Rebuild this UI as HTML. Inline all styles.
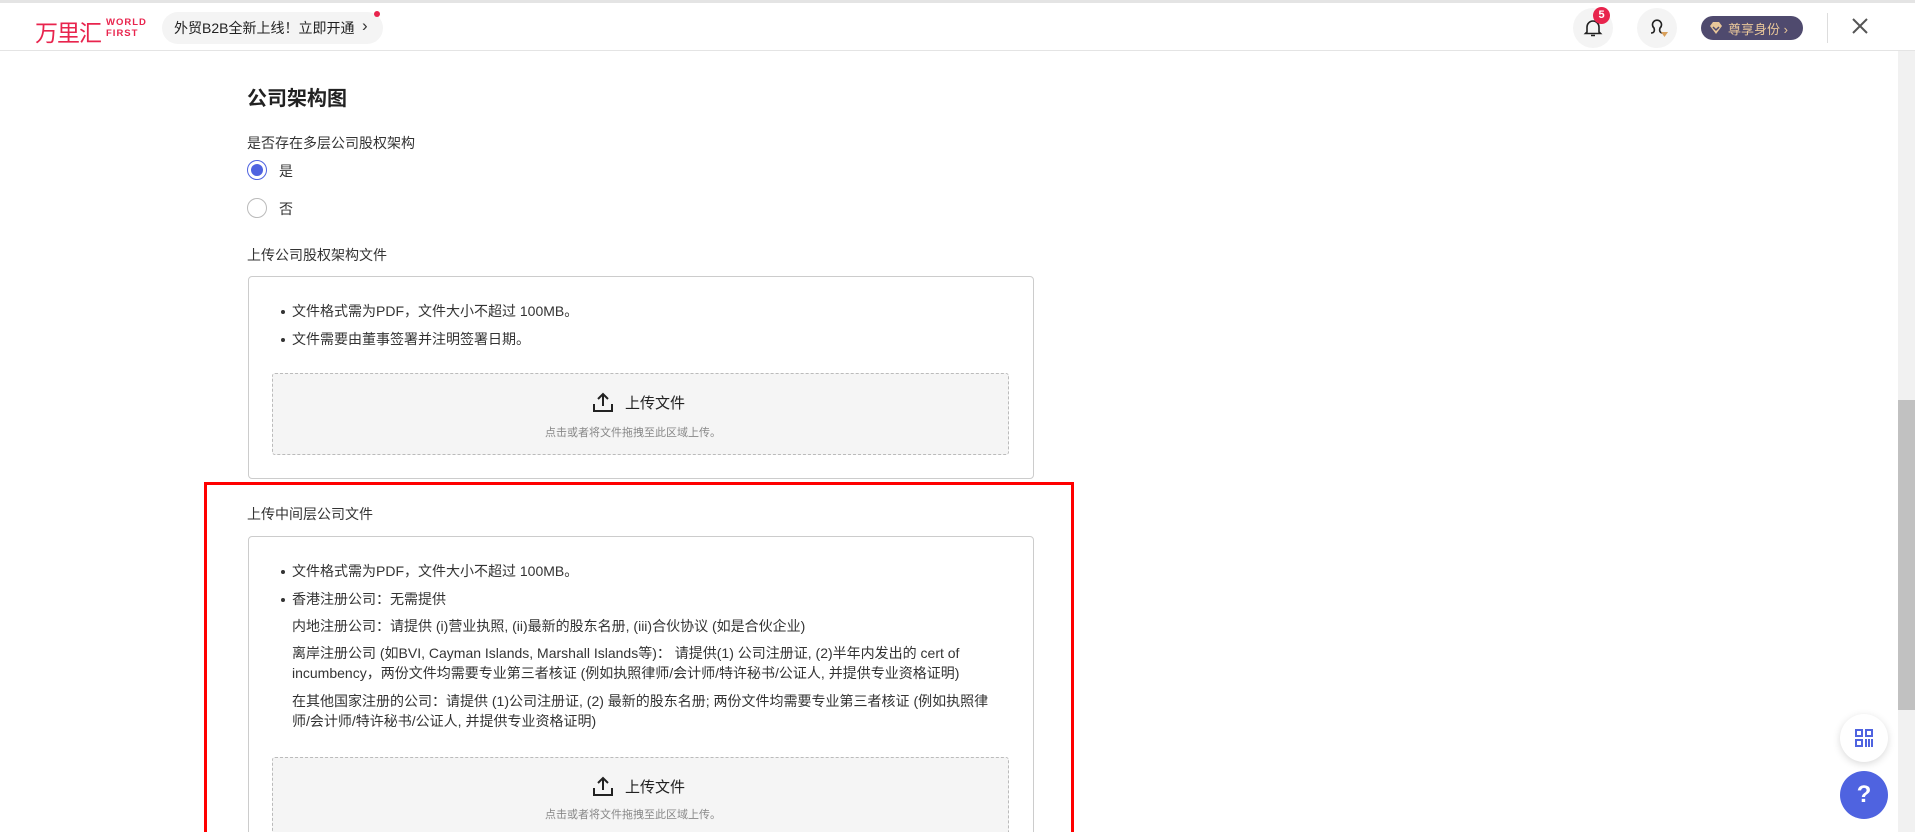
<!DOCTYPE html>
<html style="overflow:hidden;height:832px"><head><meta charset="utf-8"><style>
*{box-sizing:border-box;margin:0;padding:0}
body{width:1915px;height:832px;overflow:hidden;background:#fff;font-family:"Liberation Sans","Noto Sans CJK SC",sans-serif;color:#333;position:relative}
.abs{position:absolute}
.t13{font-size:14px;color:#333;white-space:nowrap}
.box{position:absolute;left:248px;width:786px;border:1px solid #ccc;border-radius:4px;background:#fff}
.drop{position:absolute;left:272px;width:737px;height:82px;border:1px dashed #bbb;border-radius:3px;background:#f5f5f5}
.bul{position:absolute;left:281px;width:4px;height:4px;border-radius:50%;background:#333}
</style></head><body>
<div class="abs" style="left:0;top:0;width:1915px;height:3px;background:#e4e4e4"></div>
<div class="abs" style="left:0;top:50px;width:1915px;height:1px;background:#e4e4e4"></div>
<div class="abs" style="left:35px;top:14px;font-size:23px;color:#e8244d;letter-spacing:-1px">万里汇</div>
<div class="abs" style="left:106px;top:17px;font-size:9.5px;font-weight:bold;color:#e8244d;line-height:11px;letter-spacing:1px">WORLD<br>FIRST</div>
<div class="abs" style="left:162px;top:12px;width:221px;height:32px;border-radius:16px;background:#f4f4f4"></div>
<div class="abs" style="left:174px;top:18px;font-size:14px;color:#222">外贸B2B全新上线！立即开通</div>
<div class="abs" style="left:362px;top:16px;font-size:17px;color:#333">›</div>
<div class="abs" style="left:374px;top:11px;width:6px;height:6px;border-radius:50%;background:#e8244d"></div>
<div class="abs" style="left:1573px;top:8px;width:40px;height:40px;border-radius:50%;background:#f4f4f4"></div>
<svg class="abs" style="left:1582px;top:17px" width="22" height="22" viewBox="0 0 22 22"><path d="M5 15V10a6 6 0 0 1 12 0v5l1.5 1.5h-15z M9 18.5h4" fill="none" stroke="#222" stroke-width="1.6"/></svg>
<div class="abs" style="left:1593px;top:7px;width:17px;height:17px;border-radius:50%;background:#e8244d;color:#fff;font-size:11px;font-weight:bold;text-align:center;line-height:17px">5</div>
<div class="abs" style="left:1637px;top:8px;width:40px;height:40px;border-radius:50%;background:#f4f4f4"></div>
<svg class="abs" style="left:1645px;top:16px" width="26" height="24" viewBox="0 0 26 24"><path d="M6 17c3 0 4-2 3-5a4.5 4.5 0 1 1 6 0c-1 3 0 5 3 5" fill="none" stroke="#222" stroke-width="1.6"/><path d="M16 16l3.5 5 3.5-5z" fill="#d9a05b"/></svg>
<div class="abs" style="left:1701px;top:16px;width:102px;height:24px;border-radius:12px;background:#4f4a6e"></div>
<svg class="abs" style="left:1708px;top:20px" width="16" height="16" viewBox="0 0 16 16"><path d="M2 6l3-4h6l3 4-6 8z" fill="#e9c79a"/><path d="M5 7l3 3 3-3" stroke="#4f4a6e" stroke-width="1.5" fill="none"/></svg>
<div class="abs" style="left:1728px;top:19px;font-size:13px;color:#e9c79a">尊享身份 ›</div>
<div class="abs" style="left:1827px;top:13px;width:1px;height:30px;background:#ddd"></div>
<svg class="abs" style="left:1851px;top:17px" width="18" height="18" viewBox="0 0 18 18"><path d="M2 2l14 14M16 2L2 16" stroke="#555" stroke-width="2"/></svg>
<div class="abs" style="left:1898px;top:51px;width:17px;height:781px;background:#f1f1f1"></div>
<div class="abs" style="left:1898px;top:400px;width:17px;height:310px;background:#c1c1c1"></div>
<div class="abs" style="left:247px;top:82px;font-size:20px;font-weight:bold;color:#222">公司架构图</div>
<div class="abs t13" style="left:247px;top:133px">是否存在多层公司股权架构</div>
<div class="abs" style="left:247px;top:160px;width:20px;height:20px;border-radius:50%;border:1.5px solid #4f63e0;background:#fff"></div>
<div class="abs" style="left:251px;top:164px;width:12px;height:12px;border-radius:50%;background:#4f63e0"></div>
<div class="abs t13" style="left:279px;top:161px">是</div>
<div class="abs" style="left:247px;top:198px;width:20px;height:20px;border-radius:50%;border:1.5px solid #bbb"></div>
<div class="abs t13" style="left:279px;top:199px">否</div>
<div class="abs t13" style="left:247px;top:245px">上传公司股权架构文件</div>
<div class="box" style="top:276px;height:203px"></div>
<div class="bul" style="top:310px"></div><div class="abs t13" style="left:292px;top:301px">文件格式需为PDF，文件大小不超过 100MB。</div>
<div class="bul" style="top:338px"></div><div class="abs t13" style="left:292px;top:329px">文件需要由董事签署并注明签署日期。</div>
<div class="drop" style="top:373px"></div>
<svg class="abs" style="left:592px;top:391px" width="22" height="22" viewBox="0 0 22 22"><path d="M11 15V3M6 8l5-5 5 5M2 13v7h18v-7" fill="none" stroke="#222" stroke-width="2"/></svg>
<div class="abs" style="left:625px;top:392px;font-size:15px;color:#222">上传文件</div>
<div class="abs" style="left:545px;top:424px;font-size:11px;color:#888">点击或者将文件拖拽至此区域上传。</div>
<div class="abs" style="left:204px;top:482px;width:870px;height:360px;border:3px solid #f00"></div>
<div class="abs t13" style="left:247px;top:504px">上传中间层公司文件</div>
<div class="box" style="top:536px;height:300px"></div>
<div class="bul" style="top:570px"></div><div class="abs t13" style="left:292px;top:561px">文件格式需为PDF，文件大小不超过 100MB。</div>
<div class="bul" style="top:598px"></div><div class="abs t13" style="left:292px;top:589px">香港注册公司：无需提供</div>
<div class="abs t13" style="left:292px;top:616px">内地注册公司：请提供 (i)营业执照, (ii)最新的股东名册, (iii)合伙协议 (如是合伙企业)</div>
<div class="abs t13" style="left:292px;top:643px;line-height:20px">离岸注册公司 (如BVI, Cayman Islands, Marshall Islands等)： 请提供(1) 公司注册证, (2)半年内发出的 cert of<br>incumbency，两份文件均需要专业第三者核证 (例如执照律师/会计师/特许秘书/公证人, 并提供专业资格证明)</div>
<div class="abs t13" style="left:292px;top:691px;line-height:20px">在其他国家注册的公司：请提供 (1)公司注册证, (2) 最新的股东名册; 两份文件均需要专业第三者核证 (例如执照律<br>师/会计师/特许秘书/公证人, 并提供专业资格证明)</div>
<div class="drop" style="top:757px"></div>
<svg class="abs" style="left:592px;top:775px" width="22" height="22" viewBox="0 0 22 22"><path d="M11 15V3M6 8l5-5 5 5M2 13v7h18v-7" fill="none" stroke="#222" stroke-width="2"/></svg>
<div class="abs" style="left:625px;top:776px;font-size:15px;color:#222">上传文件</div>
<div class="abs" style="left:545px;top:806px;font-size:11px;color:#888">点击或者将文件拖拽至此区域上传。</div>
<div class="abs" style="left:1840px;top:714px;width:48px;height:48px;border-radius:50%;background:#fff;box-shadow:0 2px 8px rgba(0,0,0,.15)"></div>
<svg class="abs" style="left:1855px;top:729px" width="18" height="18" viewBox="0 0 18 18" fill="none" stroke="#4f63e0" stroke-width="2"><rect x="1" y="1" width="6" height="6"/><rect x="11" y="1" width="6" height="6"/><rect x="1" y="11" width="6" height="6"/><path d="M11 10v8M14 10v8M17 10v8"/></svg>
<div class="abs" style="left:1840px;top:771px;width:48px;height:48px;border-radius:50%;background:#4f63e0;color:#fff;font-size:24px;font-weight:bold;text-align:center;line-height:48px">?</div>
</body></html>
